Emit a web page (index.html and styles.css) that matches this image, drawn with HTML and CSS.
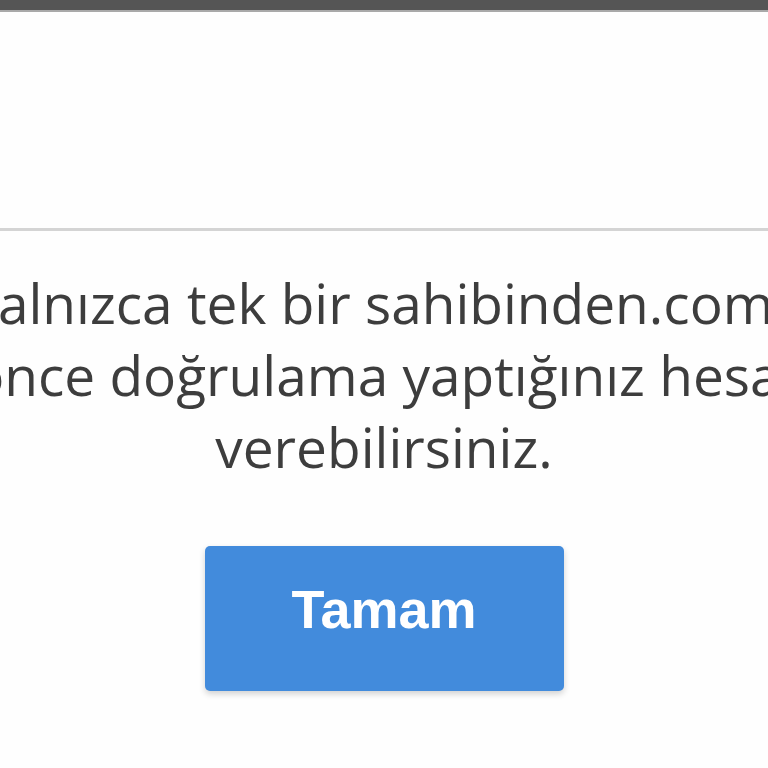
FILE: index.html
```html
<!DOCTYPE html>
<html lang="tr">
<head>
<meta charset="utf-8">
<link rel="stylesheet" href="styles.css">
</head>
<body>
<div class="topbar"></div>
<div class="header"></div>
<div class="content">
  <p class="message">
    <span class="line">GSM ile yalnızca tek bir sahibinden.com hesabını</span>
    <span class="line">Daha önce doğrulama yaptığınız hesabınızla</span>
    <span class="line">verebilirsiniz.</span>
  </p>
  <div class="actions">
    <button class="btn">Tamam</button>
  </div>
</div>
</body>
</html>
```
FILE: styles.css
```css
html, body {
  margin: 0;
  padding: 0;
  background: #fefefe;
  overflow: hidden;
}
body {
  width: 768px;
  height: 768px;
  font-family: "Open Sans", "Liberation Sans", sans-serif;
}
.topbar {
  height: 10px;
  background: #555555;
  border-bottom: 2px solid #a9a9a9;
}
.header {
  height: 216px;
  border-bottom: 3px solid #d4d4d4;
}
.content {
  padding-top: 36px;
  display: flex;
  flex-direction: column;
  align-items: center;
}
.message {
  margin: 0;
  width: 768px;
  display: flex;
  flex-direction: column;
  align-items: center;
  font-size: 55px;
  line-height: 72px;
  color: #3d3d3d;
}
.line {
  white-space: nowrap;
}
.actions {
  margin-top: 63px;
  display: flex;
  justify-content: center;
}
.btn {
  width: 359px;
  height: 145px;
  border: none;
  border-radius: 5px;
  background: #428bdc;
  color: #ffffff;
  font-family: "Liberation Sans", Arial, sans-serif;
  font-weight: bold;
  font-size: 54px;
  box-shadow: 0 3px 6px rgba(0, 0, 0, 0.18);
  padding: 0 0 20px 0;
}
```
